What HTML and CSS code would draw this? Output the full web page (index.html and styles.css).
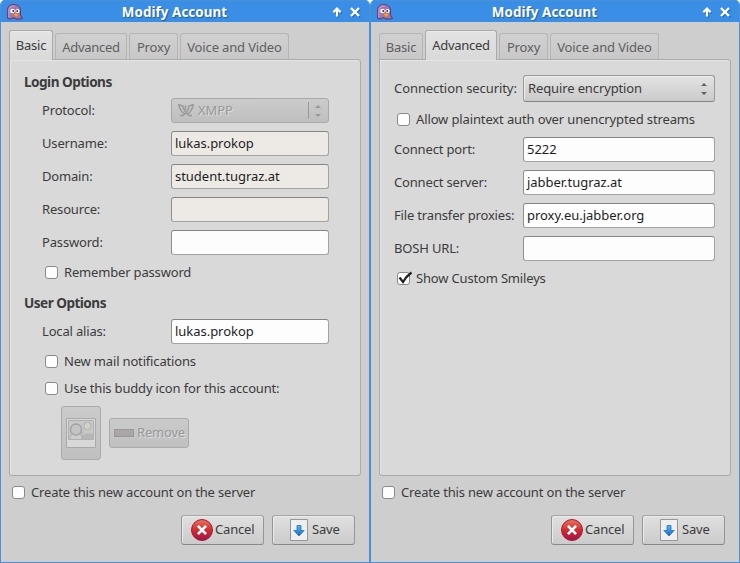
FILE: index.html
```
<!DOCTYPE html>
<html lang="en">
<head>
<meta charset="utf-8">
<title>Modify Account</title>
<link rel="stylesheet" href="styles.css">
</head>
<body>
<svg width="0" height="0" class="defs">
  <defs>
    <linearGradient id="red" x1="0" y1="0" x2="0" y2="1"><stop offset="0" stop-color="#ee735f"/><stop offset=".5" stop-color="#d22c2e"/><stop offset="1" stop-color="#a4104a"/></linearGradient>
    <linearGradient id="blue" x1="0" y1="0" x2="0" y2="1"><stop offset="0" stop-color="#55b7ee"/><stop offset="1" stop-color="#1768c5"/></linearGradient>
    <symbol id="pidgin" viewBox="0 0 16 16">
      <path d="M.7 14.500V6C.7 2 3.500.6 7 .6s6.500 2 6.500 6V11l2 3.500-3 .5H9l-3-1.500-2 1.500z" fill="#a077ae" stroke="#5a3768"/>
      <path d="M1.800 13.500V6c.5-3 2.500-4.200 6-4.200" fill="none" stroke="#c59bcb" stroke-width="1.200"/>
      <circle cx="5.500" cy="7" r="2.300" fill="#fff"/><circle cx="10.500" cy="7" r="2.100" fill="#fff"/>
      <circle cx="6.200" cy="7" r=".9" fill="#352443"/><circle cx="10.200" cy="7" r=".9" fill="#352443"/>
      <path d="M6.300 10.200 8.500 9l3.700 1.200-3.200 3.300z" fill="#f8a12c" stroke="#c45b2b" stroke-width=".5"/>
    </symbol>
    <symbol id="up" viewBox="0 0 10 10"><path d="M5 9.500V2M1.300 5.300 5 1.600l3.700 3.700" fill="none" stroke="#fff" stroke-width="2.200"/></symbol>
    <symbol id="close" viewBox="0 0 10 10"><path d="m1 1 8 8M9 1 1 9" stroke="#fff" stroke-width="2.300"/></symbol>
    <symbol id="cancel" viewBox="0 0 22 22">
      <circle cx="11" cy="11" r="10.500" fill="url(#red)" stroke="#98203a"/>
      <path d="m6.900 6.900 8.200 8.200M15.100 6.900l-8.200 8.200" stroke="#fff" stroke-width="2.700"/>
    </symbol>
    <symbol id="save" viewBox="0 0 18 22">
      <path d="M.5.5h17v21H.5z" fill="#efefef" stroke="#969696"/>
      <path d="M7 6.500h4v5h3.200L9 17l-5.200-5.500H7z" fill="url(#blue)" stroke="#2173bd" stroke-width=".8"/>
    </symbol>
    <symbol id="spin" viewBox="0 0 6 12"><path d="M0 3 3 0l3 3zM0 9h6l-3 3z" fill="currentColor"/></symbol>
  </defs>
</svg>

<main class="desktop">
  <section class="window">
    <header class="titlebar"><svg class="app"><use href="#pidgin"/></svg><h1>Modify Account</h1><svg class="ctl"><use href="#up"/></svg><svg class="ctl"><use href="#close"/></svg></header>
    <nav class="tabs"><span class="tab basic active">Basic</span><span class="tab advanced">Advanced</span><span class="tab proxy">Proxy</span><span class="tab voice">Voice and Video</span></nav>
    <div class="panel">
      <h2 class="login">Login Options</h2>
      <div class="row"><span class="label">Protocol:</span>
        <div class="combo disabled">
          <svg class="xmpp" viewBox="0 0 16 13"><path d="M0 .5 5 2C5.500 6 7 8.500 11 11.500h3M16 .5 11 2C10.500 6 9 8.500 5 11.500H2M1 1c.5 4 2 6.500 5.500 9M15 1c-.5 4-2 6.500-5.500 9M7.500 1.500V6" fill="none" stroke="#999" stroke-width="1.500"/></svg>
          <span>XMPP</span><i class="sep"></i><svg class="spin"><use href="#spin"/></svg>
        </div></div>
      <div class="row"><span class="label">Username:</span><div class="entry locked">lukas.prokop</div></div>
      <div class="row"><span class="label">Domain:</span><div class="entry locked">student.tugraz.at</div></div>
      <div class="row"><span class="label">Resource:</span><div class="entry locked"></div></div>
      <div class="row"><span class="label">Password:</span><div class="entry"></div></div>
      <div class="check"><i class="box"></i><span>Remember password</span></div>
      <h2 class="user">User Options</h2>
      <div class="row"><span class="label">Local alias:</span><div class="entry">lukas.prokop</div></div>
      <div class="check"><i class="box"></i><span>New mail notifications</span></div>
      <div class="check"><i class="box"></i><span>Use this buddy icon for this account:</span></div>
      <div class="buddy">
        <div class="btn picture"><svg viewBox="0 0 30 30"><path d="M.5.5h29v29H.5z" fill="#d8d8d8" stroke="#aaa"/><path d="M2.500 2.500h25v19h-25z" fill="#c8c8c8" stroke="#b0b0b0"/><path d="M15 18q6-4 12-2v5H15z" fill="#b5b6b7"/><path d="M4 21v-3q2-4 6-4t6 4v3" fill="#ccc" stroke="#aaa"/><circle cx="10" cy="11.500" r="5.500" fill="#c4c4c4" stroke="#a2a2a2" stroke-width="1.400"/><path d="m14.500 16 3-2" stroke="#aaa"/><circle cx="21.500" cy="8" r="3.700" fill="#d3d1cc" stroke="#b2b0aa"/></svg></div>
        <div class="btn remove"><i class="minus"></i><span>Remove</span></div>
      </div>
    </div>
    <footer>
      <div class="check"><i class="box"></i><span>Create this new account on the server</span></div>
      <div class="actions"><div class="btn cancel"><svg><use href="#cancel"/></svg><span>Cancel</span></div><div class="btn save"><svg><use href="#save"/></svg><span>Save</span></div></div>
    </footer>
  </section>

  <section class="window">
    <header class="titlebar"><svg class="app"><use href="#pidgin"/></svg><h1>Modify Account</h1><svg class="ctl"><use href="#up"/></svg><svg class="ctl"><use href="#close"/></svg></header>
    <nav class="tabs"><span class="tab basic">Basic</span><span class="tab advanced active">Advanced</span><span class="tab proxy">Proxy</span><span class="tab voice">Voice and Video</span></nav>
    <div class="panel wide">
      <div class="row first"><span class="label">Connection security:</span><div class="combo"><span>Require encryption</span><svg class="spin"><use href="#spin"/></svg></div></div>
      <div class="check allow"><i class="box"></i><span>Allow plaintext auth over unencrypted streams</span></div>
      <div class="row"><span class="label">Connect port:</span><div class="entry">5222</div></div>
      <div class="row"><span class="label">Connect server:</span><div class="entry">jabber.tugraz.at</div></div>
      <div class="row"><span class="label">File transfer proxies:</span><div class="entry">proxy.eu.jabber.org</div></div>
      <div class="row"><span class="label">BOSH URL:</span><div class="entry"></div></div>
      <div class="check"><i class="box"><svg class="tick" viewBox="0 0 16 14"><path d="M2.500 6.500 6 11Q9 5.500 14.500 1.500" fill="none" stroke="#222" stroke-width="2.200"/></svg></i><span>Show Custom Smileys</span></div>
    </div>
    <footer>
      <div class="check"><i class="box"></i><span>Create this new account on the server</span></div>
      <div class="actions"><div class="btn cancel"><svg><use href="#cancel"/></svg><span>Cancel</span></div><div class="btn save"><svg><use href="#save"/></svg><span>Save</span></div></div>
    </footer>
  </section>
</main>
</body>
</html>
```
FILE: styles.css
```
* { box-sizing: border-box; }
body { margin: 0; background: #fff; color: #3c3c3c; font: 13px/18px "Noto Sans", sans-serif; letter-spacing: -.17px; white-space: nowrap; }
.defs { position: absolute; }
svg { display: block; flex: none; }
h1, h2 { margin: 0; font-size: 13px; font-weight: 700; }
h2 { font-size: 13.6px; letter-spacing: -.53px; }
.desktop { display: flex; width: 740px; height: 563px; }
.window { display: flex; flex-direction: column; width: 370px; height: 563px; border: 1px solid #4a90d9; border-top: 0; border-radius: 5px 5px 0 0; background: #cecece; overflow: hidden; }
.titlebar { display: flex; align-items: center; height: 22px; padding: 2px 9px 0 6px; background: #3a8ee6; border-top: 1px solid #4a90d9; color: #fff; }
.titlebar h1 { flex: 1; padding-left: 2px; font-size: 13.33px; letter-spacing: .1px; text-align: center; text-shadow: 1px 1px 1px #235b99; line-height: 18px; padding-bottom: 1px; }
.app { width: 16px; height: 16px; margin-top: -2px; }
.ctl { width: 10px; height: 10px; margin: -1px 0 0 8px; filter: drop-shadow(1px 1px 0 #2d69ad); }
.tabs { display: flex; align-items: flex-end; gap: 2px; height: 38px; margin: 0 8px -1px; position: relative; }
.tab { height: 26px; margin-bottom: 1px; padding-top: 3px; border: 1px solid #b5b5b5; border-bottom: 0; border-radius: 3px 3px 0 0; background: linear-gradient(#d0d0d0, #c8c8c8); color: #606060; text-align: center; line-height: 20px; }
.tab.active { height: 30px; margin-bottom: 0; padding-top: 4px; border-color: #aaa; background: linear-gradient(#e3e3e3, #d9d9d9); color: #3c3c3c; box-shadow: inset 0 1px #ececec; }
.basic { width: 44px; }
.advanced { width: 72px; letter-spacing: -.3px; }
.proxy { width: 49px; }
.voice { width: 109px; letter-spacing: -.15px; }
.panel { height: 417px; margin: 0 8px; padding: 10px 0 0 14px; border: 1px solid #aaa; border-radius: 0 3px 3px 3px; background: #d9d9d9; box-shadow: inset 1px 1px #e5e5e5; }
.login { height: 24px; line-height: 23px; }
.user { height: 29px; line-height: 33px; }
.row { display: flex; align-items: center; height: 33px; padding-left: 18px; }
.label { width: 129px; padding-bottom: 2px; }
.first .label { letter-spacing: -.08px; }
.entry { width: 158px; height: 25px; padding: 2px 3px; border: 1px solid #a3a3a3; border-top-color: #858585; border-left-color: #909090; border-radius: 3px; background: #fdfdfd; color: #1e1e1e; letter-spacing: -.03px; line-height: 19px; }
.locked { background: #edeae5; }
.combo { display: flex; align-items: center; width: 158px; height: 25px; padding: 0 7px 0 4px; border: 1px solid #999; border-bottom-color: #858585; border-radius: 3px; background: linear-gradient(#e3e3e3, #cacaca); box-shadow: inset 1px 1px #ededed; letter-spacing: -.12px; }
.combo span { flex: 1; padding-bottom: 2px; }
.combo.disabled { padding-left: 6px; border-color: #a9a9a9; background: linear-gradient(#cbcbcb, #bfbfbf); box-shadow: none; color: #999; text-shadow: 1px 1px #dedede; }
.xmpp { width: 16px; height: 13px; margin-right: 4px; }
.sep { width: 1px; height: 17px; margin-right: 6px; background: #999; }
.spin { width: 6px; height: 12px; color: #606060; }
.disabled .spin { color: #999; }
.check { display: flex; align-items: center; height: 27px; padding-left: 21px; }
.check span, .btn span { padding-bottom: 2px; }
.box { position: relative; flex: none; width: 13px; height: 13px; margin-right: 6px; border: 1px solid #8a8a8a; border-radius: 3px; background: #fdfdfd; }
.tick { position: absolute; left: -1px; top: -2px; width: 16px; height: 14px; }
.buddy { display: flex; align-items: center; gap: 8px; height: 54px; margin: 4px 0 0 37px; }
.btn { display: flex; align-items: center; height: 30px; border: 1px solid #979797; border-color: #a6a6a6 #969696 #888 #969696; border-radius: 3px; background: linear-gradient(#e0e0e0, #cbcbcb); box-shadow: inset 1px 1px #eaeaea; }
.picture, .remove { border-color: #aaa; background: linear-gradient(#cbcbcb, #c0c0c0); box-shadow: none; color: #999; text-shadow: 1px 1px #dedede; }
.picture { width: 40px; height: 54px; padding-left: 4px; }
.picture svg { width: 30px; height: 30px; }
.remove { width: 80px; padding-left: 4px; letter-spacing: -.2px; }
.minus { width: 20px; height: 8px; margin-right: 3px; border: 1px solid #999; background: #aaa6a5; }
.wide { padding-top: 12px; }
.wide .row { padding-left: 0; }
.wide .entry, .wide .combo { width: 192px; }
.wide .combo { height: 27px; }
.wide .check { padding-left: 3px; }
.wide .allow { height: 28px; letter-spacing: -.13px; }
.wide .allow span { padding-bottom: 1px; }
footer { padding: 3px 14px 0 11px; }
footer .check { padding-left: 0; }
.actions { display: flex; justify-content: flex-end; gap: 8px; margin-top: 9px; }
.cancel, .save { width: 83px; }
.cancel svg { width: 22px; height: 22px; margin: 0 2px 0 9px; }
.save svg { width: 18px; height: 22px; margin: 0 4px 0 17px; }
```
